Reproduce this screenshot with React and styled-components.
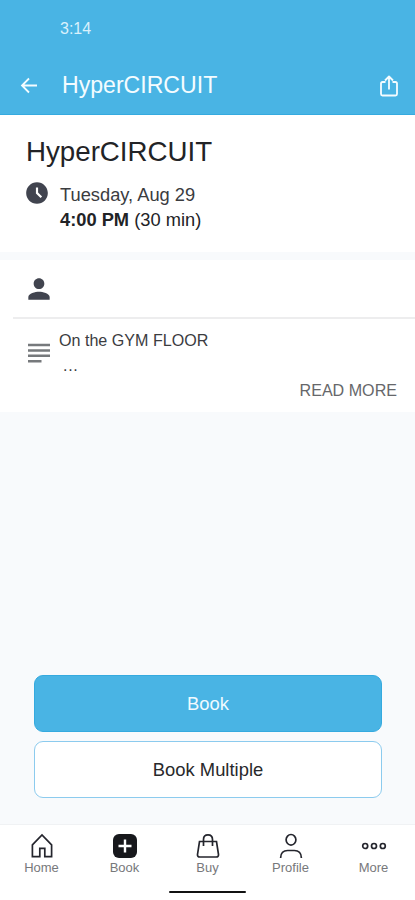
import { MdAccessTimeFilled, MdPerson } from 'react-icons/md';
import styled, { createGlobalStyle } from 'styled-components';

const GlobalStyle = createGlobalStyle`
  * {
    box-sizing: border-box;
  }

  body {
    margin: 0;
    background: #f8fafc;
    font-family: 'Liberation Sans', Arial, sans-serif;
    color: #222326;
  }

  button {
    font-family: inherit;
    padding: 0;
    border: none;
    background: none;
  }

  svg {
    display: block;
    flex-shrink: 0;
  }
`;

const Screen = styled.div`
  display: flex;
  flex-direction: column;
  width: 100%;
  height: 900px;
  overflow: hidden;
`;

const Header = styled.header`
  height: 115px;
  background: #49b4e4;
  border-bottom: 1px solid #35aadf;
  color: #f4fcff;
`;

const StatusBar = styled.div`
  height: 57px;
  padding: 19px 0 0 60px;
  font-size: 16px;
  line-height: 20px;
  color: #d9f1fc;
`;

const AppBar = styled.div`
  display: flex;
  align-items: center;
  height: 57px;
  padding: 0 16px 0 20px;
`;

const AppBarTitle = styled.h1`
  flex: 1;
  margin: 0 0 1px 22px;
  font-size: 23.1px;
  font-weight: normal;
  line-height: 28px;
`;

const Section = styled.section`
  background: #fff;
`;

const Summary = styled(Section)`
  height: 137px;
  margin-bottom: 8px;
  padding: 21px 24px 0;
`;

const ClassName = styled.h2`
  margin: 0 0 14px 2px;
  font-size: 27.7px;
  font-weight: normal;
  line-height: 32px;
`;

const When = styled.div`
  display: flex;
  gap: 10px;
  font-size: 18.3px;
  line-height: 25px;
`;

const ClockIcon = styled(MdAccessTimeFilled)`
  width: 26px;
  height: 26px;
  margin-top: -2px;
  color: #41444f;
`;

const DateLine = styled.div`
  font-size: 18.3px;
  color: #3b3c3f;
`;

const Instructor = styled(Section)`
  display: flex;
  align-items: center;
  height: 57px;
  padding-left: 23px;
`;

const Divider = styled.div`
  height: 2px;
  background: #fff;

  &::after {
    content: '';
    display: block;
    height: 2px;
    margin-left: 13px;
    background: #ededee;
  }
`;

const Description = styled(Section)`
  display: flex;
  flex-direction: column;
  height: 93px;
  padding: 9px 18px 0 28px;
`;

const DescriptionBody = styled.div`
  display: flex;
  align-items: center;
  gap: 9px;
  height: 50px;
  font-size: 16.1px;
  line-height: 25px;
  color: #3b3c3f;
`;

const Ellipsis = styled.div`
  padding-left: 4px;
  letter-spacing: 0.7px;
`;

const ReadMore = styled.button`
  align-self: flex-end;
  font-size: 16.1px;
  line-height: 25px;
  color: #66676a;
`;

const Actions = styled.div`
  display: flex;
  flex-direction: column;
  gap: 9px;
  margin-top: auto;
  padding: 0 33px 26px 34px;
`;

const ActionButton = styled.button`
  height: 57px;
  border: 1px solid ${({ $primary }) => ($primary ? '#35aadf' : '#8ccbee')};
  border-radius: 9px;
  background: ${({ $primary }) => ($primary ? '#49b4e4' : '#fff')};
  color: ${({ $primary }) => ($primary ? '#f0faff' : '#28292b')};
  font-size: 18.4px;
`;

const TabBar = styled.nav`
  display: grid;
  grid-template-columns: repeat(5, 1fr);
  height: 66px;
  padding-top: 7px;
  background: #fff;
  border-top: 1px solid #f0f2f4;
`;

const Tab = styled.div`
  display: flex;
  flex-direction: column;
  align-items: center;
  font-size: 13px;
  line-height: 16px;
  color: #77787b;
`;

const TabIcon = styled.svg`
  width: 28px;
  height: 28px;
  fill: none;
  stroke: #24252d;
  stroke-width: 1.7;
`;

const HomeIndicator = styled.div`
  display: flex;
  justify-content: center;
  height: 10px;
  background: #fff;

  &::after {
    content: '';
    width: 77px;
    height: 2px;
    margin-top: 1px;
    border-radius: 1px;
    background: #111;
  }
`;

const tabs = [
  {
    label: 'Home',
    icon: <path d="M4.4 12.8 14 3l9.6 9.800V24.600h-6.800v-8.200h-5v8.200H4.400z" />,
  },
  {
    label: 'Book',
    icon: (
      <>
        <rect x="2" y="2" width="24" height="24" rx="6" fill="#17181c" stroke="none" />
        <path d="M14 7.500v13M7.500 14h13" stroke="#fff" strokeWidth="2.400" />
      </>
    ),
  },
  {
    label: 'Buy',
    icon: (
      <>
        <path d="M5.500 9.500h17l2 13c.2 1.500-.8 2.500-2.200 2.500H5.700c-1.400 0-2.400-1-2.200-2.500z" />
        <path d="M9.500 14V7.500c0-3 1.800-4.700 4.500-4.700s4.500 1.700 4.500 4.700V14" />
      </>
    ),
  },
  {
    label: 'Profile',
    icon: (
      <>
        <ellipse cx="14" cy="7.800" rx="4.900" ry="5.300" />
        <path d="M3.600 26c0-4.800 2.900-7.500 7-7.500h6.800c4.100 0 7 2.700 7 7.500" />
      </>
    ),
  },
  {
    label: 'More',
    icon: (
      <>
        <circle cx="5.200" cy="14" r="2.500" />
        <circle cx="14" cy="14" r="2.500" />
        <circle cx="22.800" cy="14" r="2.500" />
      </>
    ),
  },
];

function BackIcon() {
  return (
    <svg width="20" height="20" fill="none" stroke="currentColor" strokeWidth="1.8">
      <path d="M17 9.500H2.500M9 2.500l-7 7 7 7" />
    </svg>
  );
}

function ShareIcon() {
  return (
    <svg width="20" height="24" fill="none" stroke="currentColor" strokeWidth="1.8">
      <path
        d="M6.500 8H3.500Q2 8 2 9.500V20q0 1.500 1.500 1.500h13q1.500 0 1.500-1.500V9.500Q18 8 16.500 8h-3M10 15.500V3M6 6.500l4-4 4 4"
        strokeLinejoin="round"
      />
    </svg>
  );
}

function NotesIcon() {
  return (
    <svg width="22" height="20" fill="none" stroke="#76797c" strokeWidth="2.500">
      <path d="M0 2h22M0 7.400h22M0 12.800h22M0 18.200h13.500" />
    </svg>
  );
}

function App() {
  return (
    <>
      <GlobalStyle />
      <Screen>
        <Header>
          <StatusBar>3:14</StatusBar>
          <AppBar>
            <BackIcon />
            <AppBarTitle>HyperCIRCUIT</AppBarTitle>
            <ShareIcon />
          </AppBar>
        </Header>

        <Summary>
          <ClassName>HyperCIRCUIT</ClassName>
          <When>
            <ClockIcon />
            <div>
              <DateLine>Tuesday, Aug 29</DateLine>
              <div>
                <b>4:00 PM</b> (30 min)
              </div>
            </div>
          </When>
        </Summary>

        <Instructor>
          <MdPerson size={32} color="#41444f" />
        </Instructor>
        <Divider />
        <Description>
          <DescriptionBody>
            <NotesIcon />
            <div>
              <div>On the GYM FLOOR</div>
              <Ellipsis>...</Ellipsis>
            </div>
          </DescriptionBody>
          <ReadMore>READ MORE</ReadMore>
        </Description>

        <Actions>
          <ActionButton $primary>Book</ActionButton>
          <ActionButton>Book Multiple</ActionButton>
        </Actions>

        <TabBar>
          {tabs.map(({ label, icon }) => (
            <Tab key={label}>
              <TabIcon viewBox="0 0 28 28">{icon}</TabIcon>
              {label}
            </Tab>
          ))}
        </TabBar>
        <HomeIndicator />
      </Screen>
    </>
  );
}

export default App;
